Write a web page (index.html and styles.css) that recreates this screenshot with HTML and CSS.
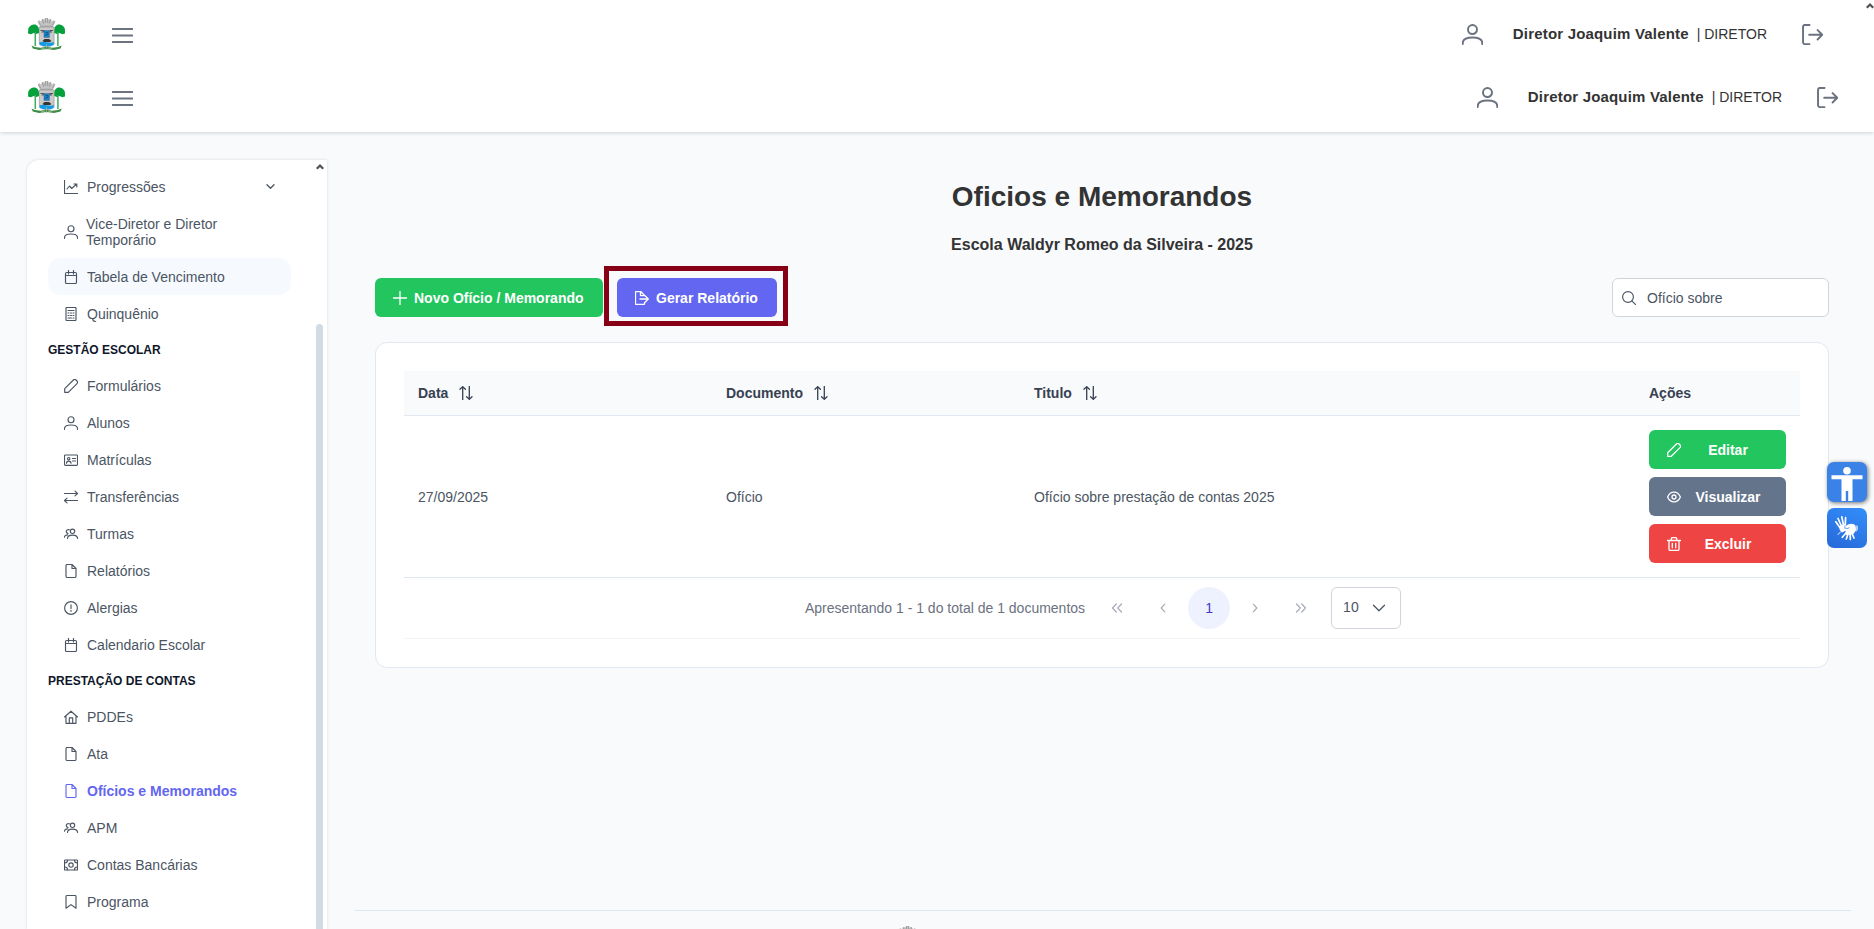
FILE: index.html
```html
<!DOCTYPE html>
<html lang="pt-BR">
<head>
<meta charset="utf-8">
<title>Oficios e Memorandos</title>
<link rel="stylesheet" href="styles.css">
</head>
<body>
<svg class="sprite" aria-hidden="true">
  <symbol id="crest" viewBox="0 0 37 33">
    <path d="M9.500 3.500l2-1.500 1.500 1.500 1-2.500 2.200 0 .8 1.500V0h3v2.500l.8-1.500H23l1 2.500L25.500 2l2 1.500L25 8.500H12z" fill="#c4c4c4"/>
    <path d="M10.500 3.500l2 3.500M14.500 1.500l1 4M17.300 0v5M19.700 0v5M22.500 1.500l-1 4M26.500 3.500L24.500 7M12 8.300h13" stroke="#858585" stroke-width=".7" fill="none"/>
    <path d="M11.300 9h14.800v17q-3 2.500-7.400 2.500T11.300 26z" fill="#cbc8ca" stroke="#8b8b8b" stroke-width=".6"/>
    <path d="M5.500 6.500C8.500 6 11 8.500 11 12v3L8.500 16l-3-1L3 16.200 0 15.500.3 10.500Q2 7 5.500 6.500zM31.700 6.500C28.700 6 26.300 8.500 26.300 12v3l2.500 1 3-1 2.400 1.200 3-.7-.4-5Q35.200 7 31.700 6.500z" fill="#04a03b"/>
    <path d="M7.300 14v14M29.900 14v14" stroke="#3bac60" stroke-width="1.500"/>
    <path d="M12.500 12.500h3v1.500h-2M25 12.500h-3v1.500h2" stroke="#444" stroke-width=".9" fill="none"/>
    <rect x="16" y="12.700" width="5.300" height="6.600" fill="#1787cc" stroke="#2a5a80" stroke-width=".5"/>
    <path d="M17.500 14.500h2.500v2h-2v1.500" stroke="#12507d" stroke-width=".8" fill="none"/>
    <path d="M14.500 23l2-2h4.500l2.500 2-1.500 1h-6z" fill="#34362f"/>
    <path d="M11.600 24.300q3-1.200 7 0 4 1 7.200-.2v2.900l-4 1.200h-6l-4.200-1.200z" fill="#159be6"/>
    <path d="M3.500 27.500l3.500 1.500 5.500.8 6-1 6 1 5.500-.8 3.800-1.500-1.300 3-6.500 1.500-7.500-1-7.500 1L4.800 30.500z" fill="#3d8c45"/>
    <path d="M18.500 26v6M13 31l4-1M24 31l-4-1" stroke="#9fb993" stroke-width=".8"/>
  </symbol>
  <symbol id="i-bars" viewBox="0 0 14 14"><path d="M.5 2.700h13M.5 7h13M.5 11.300h13"/></symbol>
  <symbol id="i-user" viewBox="0 0 14 14"><circle cx="7" cy="3.700" r="3"/><path d="M.5 13.300v-.6C.5 10.300 3 9 7 9s6.500 1.300 6.500 3.700v.6"/></symbol>
  <symbol id="i-out" viewBox="0 0 14 14"><path d="M5 13.400H2A1.300 1.300 0 0 1 .7 12.100V1.900A1.300 1.300 0 0 1 2 .6h3M4.800 7.200h8.500M10.400 4.100l3.100 3.100-3.100 3.100"/></symbol>
  <symbol id="i-chart" viewBox="0 0 14 14"><path d="M.5 0v13.500H14M3 9l2.500-3 2.200 2.500L12.800 4M9.800 4h3v3"/></symbol>
  <symbol id="i-cal" viewBox="0 0 14 14"><rect x="1.500" y="2.500" width="11" height="11" rx="1.200"/><path d="M1.500 5.500h11M4.500 0v4M9.500 0v4"/></symbol>
  <symbol id="i-calc" viewBox="0 0 14 14"><rect x="2" y=".5" width="10" height="13" rx=".8"/><path d="M4 3.500h6M4 6h1M6.500 6h1M9 6h1M4 8.500h1M6.500 8.500h1M9 8.500h1M4 11h3.500M9 11h1"/></symbol>
  <symbol id="i-pencil" viewBox="0 0 14 14"><path d="M.7 13.300V9.700L9.400 1a1.800 1.800 0 0 1 2.600 0l1 1a1.800 1.800 0 0 1 0 2.600l-8.700 8.700z"/></symbol>
  <symbol id="i-id" viewBox="0 0 14 14"><rect x=".5" y="2" width="13" height="10.300" rx=".8"/><circle cx="4.700" cy="5.700" r="1.200"/><path d="M2.500 10.200c0-2.800 4.500-2.800 4.500 0M8.500 5.500h3M8.500 8h3"/></symbol>
  <symbol id="i-swap" viewBox="0 0 14 14"><path d="M.3 3.500h13M11 1.200l2.500 2.300L11 5.800M13.700 10.500H.7M3 8.200L.5 10.500 3 12.800"/></symbol>
  <symbol id="i-users" viewBox="0 0 14 14"><circle cx="8.500" cy="4.300" r="2.200"/><path d="M3.500 11.500c0-4.600 10-4.600 10 0M5.300 2.800C1.500 1.800 1.500 6.300 4 6.400M.5 10.200C.5 8.600 2 7.800 3.700 7.900"/></symbol>
  <symbol id="i-file" viewBox="0 0 14 14"><path d="M8 .5H3.200A1.200 1.200 0 0 0 2 1.700v10.600a1.200 1.200 0 0 0 1.200 1.200h7.600a1.200 1.200 0 0 0 1.200-1.200V4.500zM8 .5v4h4"/></symbol>
  <symbol id="i-warn" viewBox="0 0 14 14"><circle cx="7" cy="7" r="6.400"/><path d="M7 3.800v3.700M7 9.300v1"/></symbol>
  <symbol id="i-home" viewBox="0 0 14 14"><path d="M.5 7L7 1.200 13.500 7M2 6v7.300h10V6M5.300 13V7.800h3.400V13"/></symbol>
  <symbol id="i-money" viewBox="0 0 14 14"><rect x=".5" y="2" width="13" height="10" rx=".6"/><circle cx="7" cy="7" r="2.200"/><path d="M.7 5Q3.500 5 3.500 2.300M10.500 2.300Q10.500 5 13.300 5M.7 9q2.800 0 2.800 2.700M10.500 11.700Q10.500 9 13.300 9"/></symbol>
  <symbol id="i-mark" viewBox="0 0 14 14"><path d="M2 13.200V1.500a1 1 0 0 1 1-1h8a1 1 0 0 1 1 1v11.700L7 9.600z"/></symbol>
  <symbol id="i-plus" viewBox="0 0 14 14"><path d="M7 .3v13.400M.3 7h13.400"/></symbol>
  <symbol id="i-export" viewBox="0 0 14 14"><path d="M9.500 11.700v1a.8.800 0 0 1-.8.800H1.300a.8.800 0 0 1-.8-.8V1.300A.8.800 0 0 1 1.300.5h4.500l3.700 4M5.500.6v4h3.700M5 8h8.200M10.300 5l3 3-3 3"/></symbol>
  <symbol id="i-search" viewBox="0 0 14 14"><circle cx="6" cy="6" r="5.400"/><path d="M9.900 9.900l3.700 3.700"/></symbol>
  <symbol id="i-sort" viewBox="0 0 14 14"><path d="M3.700 14V.8M1 3.300L3.700.6l2.700 2.700M10.300 0v13.200M7.600 10.700l2.700 2.700 2.700-2.700"/></symbol>
  <symbol id="i-eye" viewBox="0 0 14 14"><path d="M.6 7C3.500.5 10.500.5 13.400 7 10.500 13.500 3.500 13.500.6 7z"/><circle cx="7" cy="7" r="2"/></symbol>
  <symbol id="i-trash" viewBox="0 0 14 14"><path d="M.3 3.500h13.400M2 3.500v8.800a1.200 1.200 0 0 0 1.200 1.200h7.600a1.200 1.200 0 0 0 1.200-1.200V3.500M4.300 3.300V1.700A1.200 1.200 0 0 1 5.500.5h3a1.200 1.200 0 0 1 1.200 1.200v1.600M5.300 6.300v4.500M8.700 6.300v4.500"/></symbol>
  <symbol id="i-down" viewBox="0 0 14 14"><path d="M1.500 4.200L7 9.800l5.500-5.600"/></symbol>
  <symbol id="i-left" viewBox="0 0 14 14"><path d="M8.700 3.200L5.200 7l3.500 3.800"/></symbol>
  <symbol id="i-right" viewBox="0 0 14 14"><path d="M5.300 3.200L8.800 7l-3.500 3.800"/></symbol>
  <symbol id="i-first" viewBox="0 0 14 14"><path d="M6.300 3L2.500 7l3.800 4M11.500 3L7.700 7l3.800 4"/></symbol>
  <symbol id="i-last" viewBox="0 0 14 14"><path d="M2.500 3l3.800 4-3.800 4M7.700 3l3.800 4-3.800 4"/></symbol>
  <symbol id="i-caret" viewBox="0 0 8 6"><path d="M.8 5.200L4 2l3.200 3.200" stroke="#505050" stroke-width="2.200" fill="none"/></symbol>
</svg>

<header class="topbar">
  <div class="topbar-row">
    <svg class="crest"><use href="#crest"/></svg>
    <svg class="icon icon-lg menu"><use href="#i-bars"/></svg>
    <div class="account">
      <svg class="icon icon-lg"><use href="#i-user"/></svg>
      <span class="who"><b>Diretor Joaquim Valente</b><span>| DIRETOR</span></span>
      <svg class="icon icon-lg"><use href="#i-out"/></svg>
    </div>
  </div>
  <div class="topbar-row wide">
    <svg class="crest"><use href="#crest"/></svg>
    <svg class="icon icon-lg menu"><use href="#i-bars"/></svg>
    <div class="account">
      <svg class="icon icon-lg"><use href="#i-user"/></svg>
      <span class="who"><b>Diretor Joaquim Valente</b><span>| DIRETOR</span></span>
      <svg class="icon icon-lg"><use href="#i-out"/></svg>
    </div>
  </div>
  <svg class="page-caret"><use href="#i-caret"/></svg>
</header>

<div class="layout">
  <aside class="sidebar">
    <nav class="nav">
      <a class="item"><svg class="icon"><use href="#i-chart"/></svg>Progressões<svg class="icon toggle"><use href="#i-down"/></svg></a>
      <a class="item two-line"><svg class="icon"><use href="#i-user"/></svg><span>Vice-Diretor e Diretor Temporário</span></a>
      <a class="item hover"><svg class="icon"><use href="#i-cal"/></svg>Tabela de Vencimento</a>
      <a class="item"><svg class="icon"><use href="#i-calc"/></svg>Quinquênio</a>
      <h6 class="group">GESTÃO ESCOLAR</h6>
      <a class="item"><svg class="icon"><use href="#i-pencil"/></svg>Formulários</a>
      <a class="item"><svg class="icon"><use href="#i-user"/></svg>Alunos</a>
      <a class="item"><svg class="icon"><use href="#i-id"/></svg>Matrículas</a>
      <a class="item"><svg class="icon"><use href="#i-swap"/></svg>Transferências</a>
      <a class="item"><svg class="icon"><use href="#i-users"/></svg>Turmas</a>
      <a class="item"><svg class="icon"><use href="#i-file"/></svg>Relatórios</a>
      <a class="item"><svg class="icon"><use href="#i-warn"/></svg>Alergias</a>
      <a class="item"><svg class="icon"><use href="#i-cal"/></svg>Calendario Escolar</a>
      <h6 class="group">PRESTAÇÃO DE CONTAS</h6>
      <a class="item"><svg class="icon"><use href="#i-home"/></svg>PDDEs</a>
      <a class="item"><svg class="icon"><use href="#i-file"/></svg>Ata</a>
      <a class="item active"><svg class="icon"><use href="#i-file"/></svg>Ofícios e Memorandos</a>
      <a class="item"><svg class="icon"><use href="#i-users"/></svg>APM</a>
      <a class="item"><svg class="icon"><use href="#i-money"/></svg>Contas Bancárias</a>
      <a class="item"><svg class="icon"><use href="#i-mark"/></svg>Programa</a>
    </nav>
    <div class="scroll">
      <svg class="caret"><use href="#i-caret"/></svg>
      <div class="thumb"></div>
    </div>
  </aside>

  <main class="main">
    <div class="content">
      <h1 class="title">Oficios e Memorandos</h1>
      <h2 class="subtitle">Escola Waldyr Romeo da Silveira - 2025</h2>
      <div class="toolbar">
        <button class="btn green"><svg class="icon"><use href="#i-plus"/></svg>Novo Ofício / Memorando</button>
        <div class="highlight"><button class="btn indigo"><svg class="icon"><use href="#i-export"/></svg>Gerar Relatório</button></div>
        <div class="search"><svg class="icon"><use href="#i-search"/></svg><span>Ofício sobre</span></div>
      </div>

      <section class="card">
        <div class="row head">
          <div>Data<svg class="icon sort"><use href="#i-sort"/></svg></div>
          <div>Documento<svg class="icon sort"><use href="#i-sort"/></svg></div>
          <div>Titulo<svg class="icon sort"><use href="#i-sort"/></svg></div>
          <div>Ações</div>
        </div>
        <div class="row body">
          <div>27/09/2025</div>
          <div>Ofício</div>
          <div>Ofício sobre prestação de contas 2025</div>
          <div class="actions">
            <button class="btn green"><svg class="icon"><use href="#i-pencil"/></svg><span>Editar</span></button>
            <button class="btn slate"><svg class="icon"><use href="#i-eye"/></svg><span>Visualizar</span></button>
            <button class="btn red"><svg class="icon"><use href="#i-trash"/></svg><span>Excluir</span></button>
          </div>
        </div>
        <div class="pager">
          <span class="report">Apresentando 1 - 1 do total de 1 documentos</span>
          <span class="page"><svg class="icon"><use href="#i-first"/></svg></span>
          <span class="page"><svg class="icon"><use href="#i-left"/></svg></span>
          <span class="page current">1</span>
          <span class="page"><svg class="icon"><use href="#i-right"/></svg></span>
          <span class="page"><svg class="icon"><use href="#i-last"/></svg></span>
          <span class="rows">10<svg class="icon"><use href="#i-down"/></svg></span>
        </div>
      </section>
    </div>
    <footer class="footer"><svg class="crest"><use href="#crest"/></svg></footer>
  </main>
</div>

<div class="widgets">
  <div class="widget access"><svg viewBox="0 0 40 40"><circle cx="20" cy="8.700" r="3.800"/><path d="M4.500 13.300h31v4H25.500V39h-4.300V29h-2.400v10h-4.300V17.300h-10z"/></svg></div>
  <div class="widget signs"><svg viewBox="0 0 40 40"><g stroke="#fff" stroke-linecap="round" fill="none"><path d="M12.500 19L8.800 13.800M14 17L11 10.500M16.300 16L14.800 8.800M18.300 17L18.600 9.500" stroke-width="1.700"/><path d="M19 25l-3.700 4.300M21 26l-1.700 5M23.200 26.500l.1 5M25 25.500l2 4.500" stroke-width="1.700"/><path d="M13.500 24L11 26.500" stroke-width="1"/></g><path d="M12 18.500q3-3 6.500-2.500l-1.500 3 4-2.500q4-1.500 7 .5l1 2.500v3l-3 4-7 .5-1-2 1-2.500-4 2q-2.500-1.500-3-6z"/><path d="M28.500 17l2.500 1v3.500L29 24" fill="#a9cbf9"/><path d="M17 19.800l3.500.7 2-.8" stroke="#2f7be8" stroke-width=".8" fill="none"/></svg></div>
</div>
</body>
</html>
```

FILE: styles.css
```css
* { box-sizing: border-box; }

body {
  margin: 0;
  height: 929px;
  overflow: hidden;
  display: flex;
  flex-direction: column;
  background: #f8fafc;
  color: #4b5563;
  font-family: "Liberation Sans", Arial, sans-serif;
  font-size: 14px;
}

.sprite { position: absolute; width: 0; height: 0; }

.icon {
  width: 14px;
  height: 14px;
  flex: none;
  fill: none;
  stroke: currentColor;
  stroke-width: 1.15;
  stroke-linecap: round;
  stroke-linejoin: round;
}

.icon-lg { width: 21px; height: 21px; stroke-width: 1.3; }

.crest { width: 37px; height: 33px; flex: none; }

/* Top bar */
.topbar {
  position: relative;
  z-index: 1;
  flex: none;
  height: 132px;
  padding-top: 3px;
  background: #fff;
  box-shadow: 0 1px 4px rgba(0, 0, 0, .16);
}
.topbar-row {
  height: 63px;
  display: flex;
  align-items: center;
  padding: 0 51px 0 28px;
  color: #6b7280;
}
.topbar-row.wide { padding-right: 36px; }
.menu { margin: 1px 0 0 47px; }
.account { margin-left: auto; display: flex; align-items: center; }
.who {
  display: flex;
  align-items: baseline;
  gap: 8px;
  margin: 0 35px 0 30px;
  position: relative;
  top: -1px;
  color: #333;
}
.who b { font-size: 15px; letter-spacing: .18px; }
.page-caret { position: absolute; right: 0; top: 2px; width: 8px; height: 7px; }

.layout { flex: 1; min-height: 0; display: flex; padding: 28px 26px 0 27px; }

/* Sidebar */
.sidebar {
  width: 300px;
  flex: none;
  display: flex;
  overflow: hidden;
  margin-right: 24px;
  padding: 0 3px 0 21px;
  background: #fff;
  border-radius: 12px 0 0 0;
  box-shadow: 0 0 3px rgba(0, 0, 0, .14);
}
.nav { width: 243px; padding-top: 8px; }
.item {
  display: flex;
  align-items: center;
  gap: 9px;
  height: 37px;
  padding: 0 16px;
  border-radius: 12px;
}
.item.two-line { height: 53px; gap: 8px; line-height: 16px; }
.item.two-line span { width: 150px; }
.item.hover { background: #f6fafe; }
.item.active { color: #6366f1; font-weight: 700; }
.toggle { width: 9px; height: 9px; margin: 0 0 1px auto; stroke-width: 2; }
.group {
  margin: 0;
  height: 35px;
  line-height: 37px;
  color: #0f172a;
  font-size: 12px;
}
.scroll { margin-left: auto; width: 8px; display: flex; flex-direction: column; }
.caret { width: 8px; height: 7px; margin: 3px 0 154px; }
.thumb { width: 7px; flex: 1; background: #d0dbe4; border-radius: 4px 4px 0 0; }

/* Main column */
.main { flex: 1; display: flex; flex-direction: column; justify-content: space-between; }
.content { padding: 21px 19px 0 24px; }
.title { margin: 0; font-size: 28px; line-height: 32px; text-align: center; color: #333; }
.subtitle { margin: 23px 0 0; font-size: 16px; line-height: 18px; text-align: center; color: #333; }

.toolbar { display: flex; align-items: flex-start; height: 60px; margin-top: 12px; }
.btn {
  display: flex;
  align-items: center;
  gap: 7px;
  height: 39px;
  padding: 0 18px;
  border: 0;
  border-radius: 6px;
  color: #fff;
  font: 700 14px "Liberation Sans", Arial, sans-serif;
}
.btn .icon { stroke-width: 1.3; }
.toolbar .btn { width: 228px; margin-top: 12px; white-space: nowrap; padding-right: 0; }
.toolbar .btn.indigo { width: 160px; margin-top: 0; }
.green { background: #22c55e; }
.indigo { background: #6366f1; }
.slate { background: #64748b; }
.red { background: #ef4444; }
.highlight { width: 184px; height: 60px; margin-left: 1px; padding: 7px 8px; border: 5px solid #880015; }
.search {
  margin: 12px 0 0 auto;
  width: 217px;
  height: 39px;
  display: flex;
  align-items: center;
  gap: 11px;
  padding: 0 9px;
  background: #fff;
  border: 1px solid #d1d5db;
  border-radius: 6px;
}

/* Table card */
.card {
  height: 326px;
  margin-top: 16px;
  padding: 28px;
  background: #fff;
  border: 1px solid #e2e8f0;
  border-radius: 12px;
}
.row {
  display: grid;
  grid-template-columns: 308px 308px 615px 165px;
  align-items: center;
  border-bottom: 1px solid #e2e8f0;
}
.row > div { padding-left: 14px; }
.head { height: 45px; background: #f8fafc; color: #374151; font-weight: 700; }
.head > div { display: flex; align-items: center; }
.sort { margin-left: 11px; stroke-width: 1.3; }
.body { height: 162px; }
.actions { display: flex; flex-direction: column; gap: 8px; width: 151px; }
.actions .btn { gap: 0; }
.actions span { flex: 1; text-align: center; padding-left: 7px; }

.pager {
  display: flex;
  align-items: center;
  justify-content: center;
  gap: 4px;
  height: 61px;
  padding-left: 2px;
  border-bottom: 1px solid #f3f4f6;
  color: #6b7280;
}
.report { margin-right: 7px; }
.page { width: 42px; height: 42px; display: flex; align-items: center; justify-content: center; color: #a6abb5; }
.page .icon { stroke-width: 1.2; }
.current { background: #eef2ff; border-radius: 50%; color: #4338ca; }
.rows {
  width: 70px;
  height: 42px;
  margin-left: 5px;
  display: flex;
  align-items: center;
  justify-content: space-between;
  padding: 0 14px 2px 11px;
  border: 1px solid #d1d5db;
  border-radius: 6px;
  color: #4b5563;
}
.rows .icon { stroke-width: 1.3; position: relative; top: 1px; }

.footer { height: 19px; margin: 0 -3px 0 4px; padding: 15px 0 0 534px; border-top: 1px solid #dbe7f0; overflow: hidden; }

/* Floating accessibility shortcuts */
.widgets { position: absolute; z-index: 2; left: 1827px; top: 462px; display: flex; flex-direction: column; gap: 6px; }
.widget { width: 40px; height: 40px; border-radius: 7px; }
.widget svg { display: block; fill: #fff; }
.access { background: #3b82e6; box-shadow: 1px 1px 4px rgba(0, 0, 0, .55); }
.signs { background: linear-gradient(25deg, #2668d8, #338efa); }
```
